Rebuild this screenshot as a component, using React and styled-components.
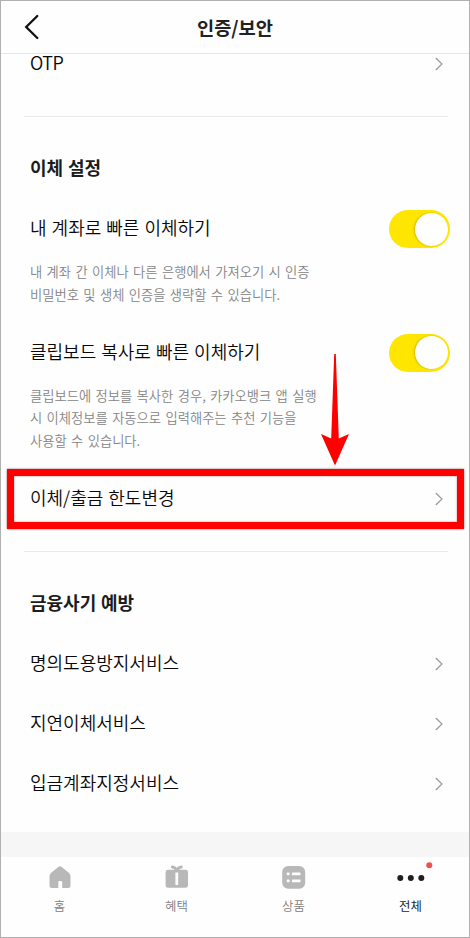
import styled, { createGlobalStyle } from "styled-components";

const GlobalStyle = createGlobalStyle`
  * {
    box-sizing: border-box;
  }
  body {
    margin: 0;
    background: #fff;
    font-family: "Noto Sans CJK KR", "Noto Sans", sans-serif;
  }
`;

const Screen = styled.div`
  width: 470px;
  height: 938px;
  border: 1px solid #b0b0b0;
  background-color: #fefefe;
  display: flex;
  flex-direction: column;
  overflow: hidden;
`;

const Header = styled.header`
  flex: none;
  height: 53px;
  display: grid;
  grid-template-columns: 60px 1fr 60px;
  align-items: center;
  border-bottom: 1px solid #e6e6e6;
`;

const BackButton = styled.button`
  display: flex;
  padding: 0 0 0 23px;
  border: none;
  background: none;
  cursor: pointer;
`;

const PageTitle = styled.h1`
  margin: 0;
  padding-bottom: 1px;
  font-size: 18.7px;
  line-height: 26px;
  font-weight: 700;
  color: #222;
  text-align: center;
`;

const Content = styled.main`
  flex: 1;
  min-height: 0;
`;

const Section = styled.section`
  padding: 0 19px 0 29px;
  margin-top: ${(props) => props.$offset || 0}px;
`;

const SectionTitle = styled.h2`
  margin: 0;
  padding-top: 36px;
  height: 82px;
  font-size: 18px;
  line-height: 28px;
  font-weight: 700;
  word-spacing: 0.7px;
  color: #1c1c1c;
`;

const Row = styled.div`
  position: relative;
  height: 60px;
  display: flex;
  align-items: center;
  justify-content: space-between;
  padding-right: ${(props) => (props.$toggle ? 0 : 7)}px;
`;

const Label = styled.span`
  font-size: 18px;
  line-height: 16px;
  font-weight: 350;
  word-spacing: 1px;
  letter-spacing: ${(props) => (props.$tight ? -0.5 : 0)}px;
  color: #080808;
  padding-bottom: 4px;
`;

const Description = styled.p`
  margin: 0;
  padding-top: 2px;
  padding-bottom: 16px;
  font-size: 13.3px;
  line-height: 22.8px;
  font-weight: 350;
  word-spacing: 1.4px;
  color: #858585;
  white-space: pre-line;
`;

const Switch = styled.button`
  width: 61px;
  height: 38px;
  padding: 2px;
  border: none;
  border-radius: 19px;
  background-color: #ffe600;
  display: flex;
  justify-content: flex-end;
  align-items: center;
  cursor: pointer;
`;

const Knob = styled.span`
  width: 33px;
  height: 33px;
  border-radius: 50%;
  background-color: #fff;
  box-shadow: -1px 0 2px rgba(120, 100, 0, 0.35);
`;

const Divider = styled.hr`
  height: 1px;
  margin: 22px 21px 0 23px;
  border: none;
  background-color: #e9e9e9;
`;

const Highlight = styled.div`
  position: absolute;
  top: 0;
  bottom: 0;
  left: -23px;
  right: -14px;
  border: 7px solid #fe0000;
  box-shadow: 0 0 2px rgba(80, 0, 0, 0.6), inset 0 0 2px rgba(80, 0, 0, 0.5);
`;

const Arrow = styled.svg`
  position: absolute;
  left: 291px;
  top: -115px;
`;

const Band = styled.div`
  flex: none;
  height: 25px;
  background-color: #f6f6f6;
`;

const Nav = styled.nav`
  flex: none;
  height: 80px;
  display: grid;
  grid-template-columns: repeat(4, 117px);
`;

const Tab = styled.a`
  display: flex;
  flex-direction: column;
  align-items: center;
  padding-top: 5px;
  font-size: 12.4px;
  line-height: 18px;
  font-weight: ${(props) => (props.$active ? 400 : 350)};
  color: ${(props) => (props.$active ? "#1c1c1c" : "#808080")};
  cursor: pointer;

  svg {
    margin-bottom: 3px;
  }
`;

const Chevron = () => (
  <svg width="8" height="14" viewBox="0 0 8 14" fill="none">
    <path d="M0.8 1L7 7L0.8 13" stroke="#999" strokeWidth="1.2" />
  </svg>
);

const LinkRow = ({ children, marked, tight }) => (
  <Row>
    <Label $tight={tight}>{children}</Label>
    <Chevron />
    {marked && (
      <>
        <Highlight />
        <Arrow width="28" height="112" viewBox="0 0 28 112">
          <path
            d="M13.2 0H14.8L17.8 84.5L28 80L14 111.5L0 80L10.2 84.5Z"
            fill="#fe0000"
          />
        </Arrow>
      </>
    )}
  </Row>
);

const ToggleRow = ({ children }) => (
  <Row $toggle>
    <Label>{children}</Label>
    <Switch role="switch" aria-checked="true">
      <Knob />
    </Switch>
  </Row>
);

const HomeIcon = () => (
  <svg width="32" height="32" viewBox="0 0 32 32" fill="#b8b8b8">
    <path d="M14.3 4.9Q16 3.6 17.7 4.9L24.8 10.7Q26.5 12.2 26.5 14.2V23.5Q26.5 26 24 26H18.2V20.3Q18.2 19 16.9 19H15.6Q14.3 19 14.3 20.3V26H8Q5.5 26 5.5 23.5V14.2Q5.5 12.2 7.2 10.7Z" />
  </svg>
);

const GiftIcon = () => (
  <svg width="32" height="32" viewBox="0 0 32 32" fill="#b8b8b8">
    <rect x="4.6" y="7.8" width="22.4" height="18" rx="2.4" />
    <path
      d="M11.2 5Q14.4 5.4 15.8 8.6Q17.2 5.4 20.4 5"
      fill="none"
      stroke="#b8b8b8"
      strokeWidth="2.8"
      strokeLinecap="round"
    />
    <rect x="14.4" y="10.4" width="2.8" height="12.6" rx="0.4" fill="#fefefe" />
  </svg>
);

const ListIcon = () => (
  <svg width="32" height="32" viewBox="0 0 32 32" fill="#b8b8b8">
    <rect x="4.2" y="4" width="23" height="22.8" rx="6" />
    <g fill="#fefefe">
      <rect x="8.7" y="10.4" width="3" height="2.8" rx="1" />
      <rect x="13.9" y="10.4" width="8.6" height="2.8" rx="0.5" />
      <rect x="8.7" y="17.4" width="3" height="2.8" rx="1" />
      <rect x="13.9" y="17.4" width="8.6" height="2.8" rx="0.5" />
    </g>
  </svg>
);

const MoreIcon = () => (
  <svg width="46" height="32" viewBox="0 0 46 32" fill="#1f1f1f">
    <circle cx="12.3" cy="16" r="3" />
    <circle cx="22.8" cy="16" r="3" />
    <circle cx="33.3" cy="16" r="3" />
    <circle cx="41.3" cy="3.3" r="3" fill="#f05050" />
  </svg>
);

const App = () => {
  return (
    <>
      <GlobalStyle />
      <Screen>
        <Header>
          <BackButton aria-label="back">
            <svg width="16" height="26" viewBox="0 0 16 26" fill="none">
              <path
                d="M13.3 2L2.2 13L13.3 24"
                stroke="#111"
                strokeWidth="2.3"
                strokeLinecap="round"
              />
            </svg>
          </BackButton>
          <PageTitle>인증/보안</PageTitle>
        </Header>
        <Content>
          <Section $offset={-20}>
            <LinkRow tight>OTP</LinkRow>
          </Section>
          <Divider />
          <Section>
            <SectionTitle>이체 설정</SectionTitle>
            <ToggleRow>내 계좌로 빠른 이체하기</ToggleRow>
            <Description>
              {"내 계좌 간 이체나 다른 은행에서 가져오기 시 인증\n비밀번호 및 생체 인증을 생략할 수 있습니다."}
            </Description>
            <ToggleRow>클립보드 복사로 빠른 이체하기</ToggleRow>
            <Description>
              {"클립보드에 정보를 복사한 경우, 카카오뱅크 앱 실행\n시 이체정보를 자동으로 입력해주는 추천 기능을\n사용할 수 있습니다."}
            </Description>
            <LinkRow marked>이체/출금 한도변경</LinkRow>
          </Section>
          <Divider />
          <Section>
            <SectionTitle>금융사기 예방</SectionTitle>
            <LinkRow>명의도용방지서비스</LinkRow>
            <LinkRow>지연이체서비스</LinkRow>
            <LinkRow>입금계좌지정서비스</LinkRow>
          </Section>
        </Content>
        <Band />
        <Nav>
          <Tab>
            <HomeIcon />홈
          </Tab>
          <Tab>
            <GiftIcon />
            혜택
          </Tab>
          <Tab>
            <ListIcon />
            상품
          </Tab>
          <Tab $active>
            <MoreIcon />
            전체
          </Tab>
        </Nav>
      </Screen>
    </>
  );
};

export default App;
